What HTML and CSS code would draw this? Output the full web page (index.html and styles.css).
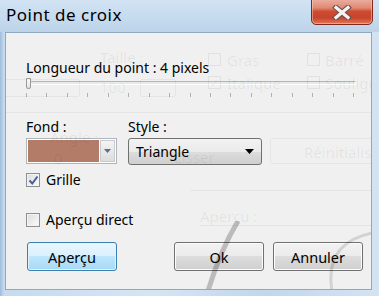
FILE: index.html
```html
<!DOCTYPE html>
<html lang="fr">
<head>
    <meta charset="utf-8" />
    <title>Point de croix</title>
    <link rel="stylesheet" href="styles.css">
</head>
<body>
    <div class="window">
        <div class="titlebar">
            <span class="title">Point de croix</span>
            <button class="close" aria-label="Fermer">
                <svg width="22" height="15" viewBox="0 0 22 15">
                    <path d="M5 2.5 L17 12.5 M17 2.5 L5 12.5" stroke="#6a5450" stroke-width="5.5" stroke-linecap="square" />
                    <path d="M5 2.5 L17 12.5 M17 2.5 L5 12.5" stroke="#f6f2f2" stroke-width="3.2" stroke-linecap="square" />
                </svg>
            </button>
        </div>

        <div class="client">
            <div class="content">
                <label class="label length">Longueur du point : 4 pixels</label>
                <div class="slider">
                    <div class="track"></div>
                    <div class="thumb"></div>
                    <div class="ticks">
                        <i></i><i></i><i></i><i></i><i></i><i></i><i></i><i></i><i></i>
                        <i></i><i></i><i></i><i></i><i></i><i></i><i></i><i></i>
                    </div>
                </div>

                <div class="row pickers">
                    <div class="field">
                        <span class="label">Fond :</span>
                        <div class="color-combo">
                            <span class="swatch"></span>
                            <span class="combo-btn">
                                <svg width="7" height="4" viewBox="0 0 7 4"><path d="M0 0 H7 L3.5 4 Z" fill="#5b6f8f" /></svg>
                            </span>
                        </div>
                    </div>
                    <div class="field">
                        <span class="label">Style :</span>
                        <div class="select">
                            <span>Triangle</span>
                            <svg width="9" height="5" viewBox="0 0 9 5"><path d="M0 0 H9 L4.5 5 Z" fill="#000" /></svg>
                        </div>
                    </div>
                </div>

                <label class="check grille">
                    <span class="box checked">
                        <svg width="11" height="11" viewBox="0 0 11 11"><path d="M1.5 5.5 L4.3 8.5 L9.5 1.5" stroke="#4a5f97" stroke-width="2" fill="none" /></svg>
                    </span>
                    Grille
                </label>

                <label class="check direct">
                    <span class="box"></span>
                    Aperçu direct
                </label>

                <div class="row buttons">
                    <button class="btn default">Aperçu</button>
                    <span class="spacer"></span>
                    <button class="btn">Ok</button>
                    <button class="btn">Annuler</button>
                </div>
            </div>

            <!-- the window behind, showing faintly through the dialog -->
            <div class="ghost" aria-hidden="true">
                <span class="g-text" style="left: 94px; top: 14px;">Taille :</span>
                <span class="g-box" style="left: -10px; top: 46px; width: 84px; height: 18px;"></span>
                <span class="g-text" style="left: 94px; top: 44px;">100</span>
                <span class="g-box" style="left: 134px; top: 46px; width: 36px; height: 18px;"></span>
                <span class="g-check" style="left: 202px; top: 20px;"></span>
                <span class="g-text" style="left: 221px; top: 17px;">Gras</span>
                <span class="g-check" style="left: 301px; top: 20px;"></span>
                <span class="g-text" style="left: 319px; top: 17px;">Barré</span>
                <span class="g-check" style="left: 202px; top: 43px;">✓</span>
                <span class="g-text" style="left: 221px; top: 40px;">Italique</span>
                <span class="g-check" style="left: 301px; top: 43px;"></span>
                <span class="g-text" style="left: 319px; top: 40px;">Souligné</span>
                <span class="g-line" style="left: 0; top: 79px; width: 366px;"></span>
                <span class="g-text" style="left: 44px; top: 94px;">Angle :</span>
                <span class="g-text" style="left: 48px; top: 115px;">0</span>
                <span class="g-text" style="left: 168px; top: 114px;">Lisser</span>
                <span class="g-box" style="left: 264px; top: 105px; width: 110px; height: 26px;"></span>
                <span class="g-text" style="left: 298px; top: 109px;">Réinitialiser</span>
                <span class="g-line" style="left: 184px; top: 157px; width: 182px;"></span>
                <span class="g-text" style="left: 194px; top: 173px;">Aperçu :</span>
                <span class="g-line" style="left: 194px; top: 192px; width: 172px;"></span>
                <svg class="g-art" width="366" height="70" viewBox="0 0 366 70">
                    <path d="M232 0 Q214 30 202 70" stroke="rgba(0,0,0,0.22)" stroke-width="5" fill="none" />
                    <path d="M366 12 Q318 22 326 70" stroke="rgba(0,0,0,0.12)" stroke-width="3" fill="none" />
                </svg>
            </div>
        </div>
    </div>
</body>
</html>
```

FILE: styles.css
```css
:root {
    --text-color: #000;
    --ghost-color: rgba(0, 0, 0, 0.065);
    --client-bg: #f0f0f0;
}

* {
    box-sizing: border-box;
}

html,
body {
    margin: 0;
    width: 379px;
    height: 296px;
    overflow: hidden;
}

body {
    font-family: "Noto Sans", "Open Sans", sans-serif;
    font-size: 14px;
    color: var(--text-color);
    background: linear-gradient(90deg, #9dbcdc 0, #c6dbef 4px, #d5e5f4 40%, #c2d7ec 70%, #d4e3f2 100%);
}

.window {
    height: 296px;
    display: flex;
    flex-direction: column;
}

.titlebar {
    height: 32px;
    display: flex;
    justify-content: space-between;
    align-items: flex-start;
    background: linear-gradient(180deg, #d2e3f3 0, #c5daee 60%, #bcd3ea 100%);
}

.title {
    font-size: 17px;
    letter-spacing: 0.5px;
    padding: 4px 0 0 6px;
    line-height: 21px;
}

.close {
    width: 62px;
    height: 27px;
    margin: -2px 6px 0 0;
    padding: 2px 0 0 0;
    border: 1px solid #83291a;
    border-radius: 0 0 5px 5px;
    background: linear-gradient(180deg, #eab0a2 0, #e08a74 35%, #cf4a31 50%, #c7432c 75%, #e2795c 100%);
    box-shadow: inset 0 0 0 1px rgba(255, 220, 200, 0.45);
    display: flex;
    align-items: center;
    justify-content: center;
}

.client {
    position: relative;
    height: 258px;
    margin: 0 7px 0 5px;
    border: 1px solid #8fa8c2;
    background: var(--client-bg);
    overflow: hidden;
}

.ghost {
    position: absolute;
    inset: 0;
    color: var(--ghost-color);
    font-size: 15px;
    pointer-events: none;
}

.ghost > * {
    position: absolute;
}

.g-box {
    border: 1px solid rgba(0, 0, 0, 0.045);
    border-radius: 2px;
}

.g-check {
    width: 13px;
    height: 13px;
    border: 1px solid rgba(0, 0, 0, 0.06);
    font-size: 11px;
    line-height: 11px;
    text-align: center;
}

.g-line {
    height: 1px;
    background: rgba(0, 0, 0, 0.045);
}

.g-art {
    left: 0;
    top: 188px;
}

.content {
    height: 100%;
    padding: 25px 0 0 20px;
    display: flex;
    flex-direction: column;
}

.label {
    display: block;
    line-height: 19px;
}

.slider {
    position: relative;
    width: 330px;
    height: 22px;
    margin-top: 1px;
}

.track {
    margin-top: 3px;
    height: 4px;
    border: 1px solid #b5b5b5;
    border-bottom-color: #fff;
    border-right-color: #fff;
    background: #e7eaea;
}

.thumb {
    position: absolute;
    left: 0;
    top: 0;
    width: 5px;
    height: 11px;
    border: 1px solid #9a9a9a;
    border-radius: 1px 1px 3px 3px;
    background: linear-gradient(180deg, #fbfbfb, #e3e3e3);
}

.ticks {
    margin-top: 8px;
    display: flex;
    justify-content: space-between;
    padding: 0 2px 0 0;
}

.ticks i {
    width: 1px;
    height: 4px;
    background: #b0b0b0;
}

.row {
    display: flex;
}

.pickers {
    margin-top: 17px;
    gap: 11px;
}

.field {
    display: flex;
    flex-direction: column;
    gap: 2px;
}

.color-combo {
    width: 91px;
    height: 26px;
    display: flex;
    border: 1px solid #b0b4bb;
    background: #fff;
    padding: 1px;
}

.swatch {
    flex: 1;
    background: #b27c68;
}

.combo-btn {
    width: 15px;
    margin-left: 1px;
    border: 1px solid #c7cbd1;
    background: linear-gradient(180deg, #f4f4f4, #dcdcdc);
    display: flex;
    align-items: center;
    justify-content: center;
}

.select {
    width: 134px;
    height: 27px;
    padding: 0 7px 0 7px;
    border: 1px solid #707070;
    border-radius: 3px;
    background: linear-gradient(180deg, #f2f2f2 0, #ebebeb 50%, #dddddd 50%, #cfcfcf 100%);
    display: flex;
    align-items: center;
    justify-content: space-between;
}

.check {
    display: flex;
    align-items: center;
    gap: 6px;
    line-height: 18px;
}

.grille {
    margin-top: 6px;
}

.direct {
    margin-top: 22px;
}

.box {
    width: 14px;
    height: 14px;
    border: 1px solid #8e8f8f;
    background: linear-gradient(135deg, #dcdcdc, #fbfbfb);
    box-shadow: inset 0 0 0 1px #f4f4f4;
    display: flex;
    align-items: center;
    justify-content: center;
}

.buttons {
    margin-top: 13px;
    gap: 9px;
    padding-left: 1px;
}

.spacer {
    width: 39px;
}

.btn {
    width: 90px;
    height: 29px;
    font: inherit;
    font-size: 14.5px;
    color: var(--text-color);
    border: 1px solid #707070;
    border-radius: 3px;
    background: linear-gradient(180deg, #f2f2f2 0, #ebebeb 50%, #dddddd 50%, #cfcfcf 100%);
    box-shadow: inset 0 0 0 1px #fcfcfc;
}

.btn.default {
    border-color: #3c7fb1;
    background: linear-gradient(180deg, #eaf6fd 0, #d9f0fc 50%, #bee6fd 50%, #a7d9f5 100%);
    box-shadow: inset 0 0 0 1px #e4f4fc;
}
```
